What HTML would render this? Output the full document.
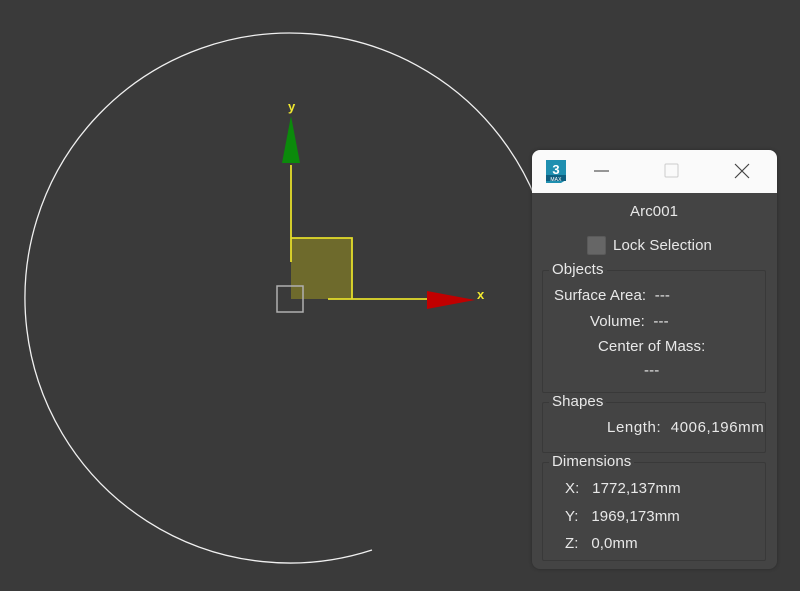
<!DOCTYPE html>
<html><head><style>
body{margin:0;width:800px;height:591px;background:#3a3a3a;overflow:hidden;position:relative;font-family:"Liberation Sans",sans-serif;font-size:15px;letter-spacing:0.1px;color:#e8e8e8}
.p{position:absolute}
.panel{left:532px;top:150px;width:245px;height:419px;background:#444;border-radius:8px;overflow:hidden;box-shadow:0 0 3px #2a2a2a}
.tb{position:absolute;left:0;top:0;width:245px;height:43px;background:#fafafa}
.g{position:absolute;left:10px;width:222px;border:1px solid #393939;border-radius:2px}
.lbl{position:absolute;background:#444;padding:0 3px;left:6px;top:-10px}
.t{position:absolute;white-space:nowrap}
</style></head><body>
<svg class="p" style="left:0;top:0" width="800" height="591">
<path d="M372 550 A265 265 0 1 1 545 370" fill="none" stroke="#f0f0f0" stroke-width="1.3"/>
<rect x="291" y="238" width="61" height="61" fill="#6e6a2c"/>
<path d="M291 238H352V299M291 165V262M328 299H430" fill="none" stroke="#e4dc2a" stroke-width="1.8"/>
<polygon points="291,116 282,163 300,163" fill="#0b8a0b"/>
<polygon points="427,291 427,309 475,300" fill="#c00000"/>
<rect x="277" y="286" width="26" height="26" fill="none" stroke="#b0b0b0" stroke-width="1.5"/>
<text x="288" y="111" fill="#f0e830" font-size="13" font-weight="bold" font-family="Liberation Sans">y</text>
<text x="477" y="299" fill="#f0e830" font-size="13" font-weight="bold" font-family="Liberation Sans">x</text>
</svg>
<div class="p panel">
<div class="tb">
<svg width="245" height="43">
<path d="M14 10h20v20l-5 3h-15z" fill="#1f8fb0"/><rect x="14" y="25" width="20" height="6" fill="#0e5f80"/>
<text x="24" y="24" fill="#fff" font-size="13" font-weight="bold" text-anchor="middle" font-family="Liberation Sans">3</text>
<text x="24" y="31" fill="#fff" font-size="5" text-anchor="middle" font-family="Liberation Sans">MAX</text>
<line x1="62" y1="21" x2="77" y2="21" stroke="#333" stroke-width="1"/>
<rect x="133" y="14" width="13" height="13" fill="none" stroke="#ccc" stroke-width="1" rx="1"/>
<path d="M203 14L217 28M217 14L203 28" stroke="#444" stroke-width="1.2"/>
</svg></div>
<div class="t" style="left:98px;top:53px">Arc001</div>
<div class="p" style="left:55px;top:86px;width:17px;height:17px;background:#666;border:1px solid #5a5a5a;border-radius:2px"></div>
<div class="t" style="left:81px;top:87px">Lock Selection</div>
<div class="g" style="top:120px;height:121px"><div class="lbl">Objects</div>
<div class="t" style="left:11px;top:16px">Surface Area:&nbsp; ---</div>
<div class="t" style="left:47px;top:42px">Volume:&nbsp; ---</div>
<div class="t" style="left:55px;top:67px">Center of Mass:</div>
<div class="t" style="left:101px;top:91px">---</div>
</div>
<div class="g" style="top:252px;height:49px"><div class="lbl">Shapes</div>
<div class="p" style="left:0;top:0;width:220px;height:49px;overflow:hidden">
<div class="t" style="left:64px;top:16px;letter-spacing:0.6px">Length:&nbsp; 4006,196mm</div></div>
</div>
<div class="g" style="top:312px;height:97px"><div class="lbl">Dimensions</div>
<div class="t" style="left:22px;top:17px">X:&nbsp;&nbsp; 1772,137mm</div>
<div class="t" style="left:22px;top:45px">Y:&nbsp;&nbsp; 1969,173mm</div>
<div class="t" style="left:22px;top:72px">Z:&nbsp;&nbsp; 0,0mm</div>
</div>
</div>
</body></html>
